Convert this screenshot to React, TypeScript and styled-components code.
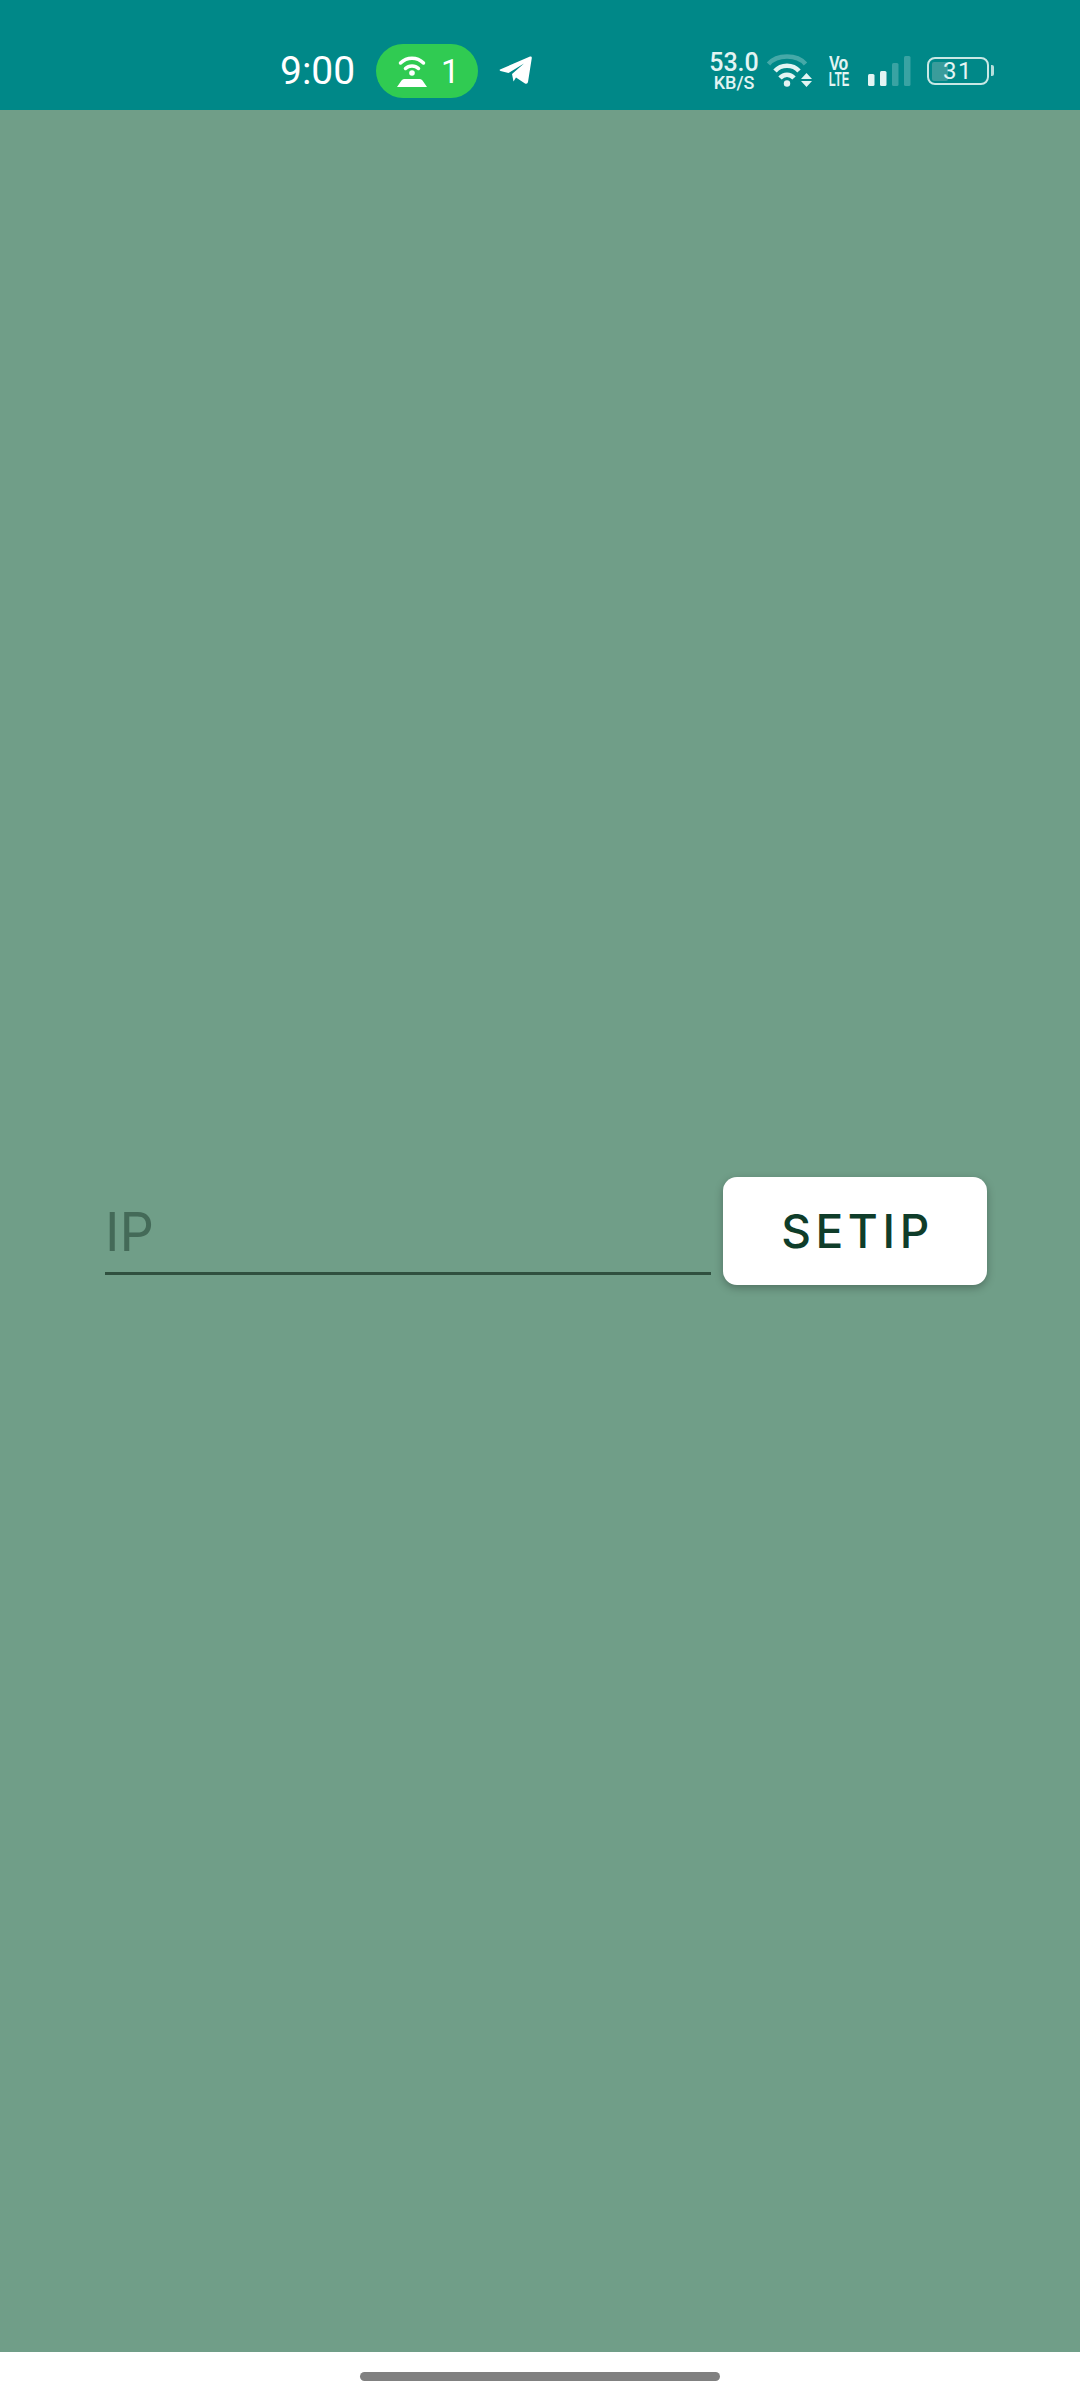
import React from 'react';
import styled, { createGlobalStyle } from 'styled-components';

const GlobalStyle = createGlobalStyle`
  html, body, #root {
    margin: 0;
    padding: 0;
    height: 100%;
  }
  body {
    font-family: Inter, Roboto, sans-serif;
  }
`;

const Screen = styled.div`
  width: 1080px;
  height: 2400px;
  display: flex;
  flex-direction: column;
  background: #709e88;
  overflow: hidden;
`;

const StatusBar = styled.div`
  height: 110px;
  flex-shrink: 0;
  background: #008888;
  display: flex;
  align-items: center;
  padding: 32px 84px 0 280px;
  box-sizing: border-box;
  color: #fff;
  font-family: Roboto, sans-serif;
`;

const Clock = styled.span`
  font-size: 39px;
  line-height: 39px;
  width: 96px;
`;

const HotspotPill = styled.div`
  width: 102px;
  height: 54px;
  border-radius: 27px;
  background: #30cb52;
  display: flex;
  align-items: center;
  padding-left: 21px;
  box-sizing: border-box;
  gap: 14px;
  font-size: 33px;
`;

const PlaneIcon = styled.svg`
  width: 34px;
  height: 30px;
  margin-left: 21px;
`;

const RightIcons = styled.div`
  margin-left: auto;
  display: flex;
  align-items: center;
`;

const Speed = styled.div`
  display: flex;
  flex-direction: column;
  align-items: center;
  width: 50px;
  margin-right: 1px;
  color: #e3f4f3;
  font-weight: 500;
`;

const SpeedValue = styled.span`
  font-size: 25px;
  line-height: 23px;
`;

const SpeedUnit = styled.span`
  font-size: 18px;
  line-height: 17px;
`;

const WifiIcon = styled.svg`
  width: 46px;
  height: 36px;
  margin-left: 6px;
`;

const VoLte = styled.div`
  width: 24px;
  margin-left: 15px;
  display: flex;
  flex-direction: column;
  align-items: center;
  color: #e3f4f3;
  font-family: 'Liberation Sans', sans-serif;
  font-weight: 700;
  font-size: 21px;
  line-height: 16px;
`;

const VoLine = styled.span<{ $squeeze: number }>`
  display: block;
  transform: scaleX(${(p) => p.$squeeze});
`;

const Signal = styled.svg`
  width: 44px;
  height: 32px;
  margin-left: 16px;
`;

const Battery = styled.div`
  position: relative;
  width: 62px;
  height: 28px;
  margin-left: 16px;
  margin-right: 7px;
  box-sizing: border-box;
  border: 2.5px solid #c9e8e5;
  border-radius: 8px;
  display: flex;
  align-items: center;
  justify-content: center;
  font-size: 24px;
  font-weight: 400;
  color: #e3f4f3;

  &::after {
    content: '';
    position: absolute;
    right: -7px;
    top: 6px;
    width: 3px;
    height: 11px;
    background: #b5dedb;
    border-radius: 0 2px 2px 0;
  }
`;

const BatteryFill = styled.span`
  position: absolute;
  left: 2.5px;
  top: 2.5px;
  bottom: 2.5px;
  width: 16px;
  background: #3a9c9b;
  border-radius: 2px;
`;

const BatteryText = styled.span`
  position: relative;
  line-height: 24px;
  letter-spacing: 1.5px;
`;

const Main = styled.div`
  flex: 1;
  display: flex;
  align-items: center;
  padding: 0 93px 0 105px;
`;

const IpField = styled.div`
  flex: 1;
  height: 108px;
  display: flex;
  align-items: flex-end;
`;

const IpInput = styled.input`
  width: 100%;
  height: 84px;
  margin: 0;
  padding: 1px 0 2px 0;
  box-sizing: border-box;
  border: 0;
  border-bottom: 3px solid #30503f;
  border-radius: 0;
  outline: none;
  background: transparent;
  font-family: Inter, sans-serif;
  font-size: 54px;
  font-weight: 400;
  color: #1f4534;
  position: relative;
  top: -10px;

  &::placeholder {
    color: #446a58;
    opacity: 1;
  }
`;

const SetIpButton = styled.button`
  width: 264px;
  height: 108px;
  margin-left: 12px;
  flex-shrink: 0;
  border: 0;
  border-radius: 14px;
  background: #fff;
  box-shadow: 0 3px 8px rgba(0, 0, 0, 0.28);
  color: #0f3d2a;
  font-family: Inter, sans-serif;
  font-size: 46px;
  font-weight: 500;
  letter-spacing: 4.6px;
  padding: 0 0 0 5px;
`;

const NavBar = styled.div`
  height: 48px;
  flex-shrink: 0;
  background: #fff;
  display: flex;
  align-items: center;
  justify-content: center;
`;

const HomeHandle = styled.div`
  width: 360px;
  height: 9px;
  border-radius: 5px;
  background: #808080;
`;

const App: React.FC = () => {
  return (
    <Screen>
      <GlobalStyle />
      <StatusBar>
        <Clock>9:00</Clock>
        <HotspotPill>
          <svg width="30" height="32" viewBox="0 0 30 32" fill="none">
            <path d="M3.5 8 C10 1.5 20 1.5 26.5 8" stroke="#fff" strokeWidth="3.5" strokeLinecap="round" />
            <path d="M8.5 13.5 C12 10 18 10 21.5 13.5" stroke="#fff" strokeWidth="3.5" strokeLinecap="round" />
            <circle cx="15" cy="18" r="2.8" fill="#fff" />
            <path d="M7 24 H23 Q24.5 24 25.5 25.5 L30 32 H0 L4.5 25.5 Q5.5 24 7 24 Z" fill="#fff" />
          </svg>
          <span>1</span>
        </HotspotPill>
        <PlaneIcon viewBox="0 0 34 30">
          <path d="M1 13.5 L31 0.5 Q33 0 32.8 2 L29 26 Q28.5 28.5 26 27.5 L17 21.5 L14.5 25.5 L13 18 L25 7.5 L9.5 17 L1.5 15 Q0 14.3 1 13.5 Z" fill="#fff" />
        </PlaneIcon>
        <RightIcons>
          <Speed>
            <SpeedValue>53.0</SpeedValue>
            <SpeedUnit>KB/S</SpeedUnit>
          </Speed>
          <WifiIcon viewBox="0 0 46 36" fill="none">
            <path d="M2.5 11 C11 1 31 1 39.5 11" stroke="#e3f4f3" strokeOpacity="0.3" strokeWidth="4.5" />
            <path d="M9 18 C15 11 27 11 33 18" stroke="#e3f4f3" strokeWidth="4.5" />
            <path d="M14 25 C18 20.5 24 20.5 28 25" stroke="#e3f4f3" strokeWidth="4.5" />
            <circle cx="21" cy="30.5" r="3.2" fill="#e3f4f3" />
            <path d="M35 26 L40.5 20 L46 26 Z M35 28 H46 L40.5 34 Z" fill="#e3f4f3" />
          </WifiIcon>
          <VoLte>
            <VoLine $squeeze={0.76}>Vo</VoLine>
            <VoLine $squeeze={0.54}>LTE</VoLine>
          </VoLte>
          <Signal viewBox="0 0 44 32">
            <rect x="1" y="19" width="6.5" height="12" rx="1.5" fill="#e3f4f3" />
            <rect x="13" y="16" width="6.5" height="15" rx="1.5" fill="#e3f4f3" />
            <rect x="25" y="8" width="6.5" height="23" rx="1.5" fill="#e3f4f3" fillOpacity="0.25" />
            <rect x="37" y="1" width="6.5" height="30" rx="1.5" fill="#e3f4f3" fillOpacity="0.25" />
          </Signal>
          <Battery>
            <BatteryFill />
            <BatteryText>31</BatteryText>
          </Battery>
        </RightIcons>
      </StatusBar>
      <Main>
        <IpField>
          <IpInput placeholder="IP" />
        </IpField>
        <SetIpButton>SETIP</SetIpButton>
      </Main>
      <NavBar>
        <HomeHandle />
      </NavBar>
    </Screen>
  );
};

export default App;
